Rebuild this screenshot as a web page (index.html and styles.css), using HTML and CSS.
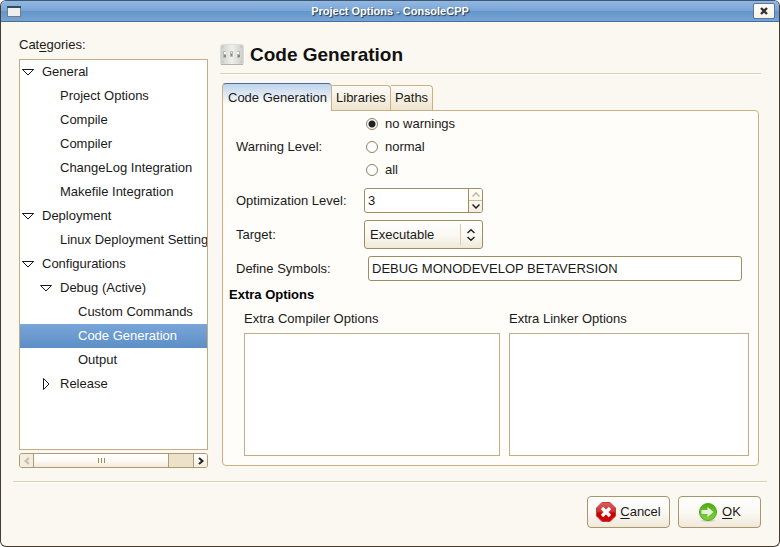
FILE: index.html
```html
<!DOCTYPE html>
<html lang="en">
<head>
<meta charset="utf-8">
<title>Project Options - ConsoleCPP</title>
<link rel="stylesheet" href="styles.css">
</head>
<body>
<div class="window">
  <header class="titlebar">
    <svg class="window-icon" width="14" height="11" viewBox="0 0 14 11" aria-hidden="true"><rect x=".5" y=".5" width="13" height="10" fill="#eeeeec" stroke="#777b80"/><path d="M0 1h14" stroke="#35485c" stroke-width="2"/></svg>
    <h1 class="title">Project Options - ConsoleCPP</h1>
    <button class="close" aria-label="Close"><svg width="8" height="8" viewBox="0 0 8 8"><path d="M1 1l6 6M7 1l-6 6" stroke="#33332f" stroke-width="2.4"/></svg></button>
  </header>
  <div class="content">
    <nav class="sidebar">
      <div class="caption" id="cat">Cat<u>e</u>gories:</div>
      <ul class="tree" aria-labelledby="cat">
        <li><button class="node"><svg class="arrow" viewBox="0 0 12 12"><path d="M.5 3.5h11L6 9z"/></svg>General</button></li>
        <li><button class="node level-2">Project Options</button></li>
        <li><button class="node level-2">Compile</button></li>
        <li><button class="node level-2">Compiler</button></li>
        <li><button class="node level-2">ChangeLog Integration</button></li>
        <li><button class="node level-2">Makefile Integration</button></li>
        <li><button class="node"><svg class="arrow" viewBox="0 0 12 12"><path d="M.5 3.5h11L6 9z"/></svg>Deployment</button></li>
        <li><button class="node level-2">Linux Deployment Settings</button></li>
        <li><button class="node"><svg class="arrow" viewBox="0 0 12 12"><path d="M.5 3.5h11L6 9z"/></svg>Configurations</button></li>
        <li><button class="node level-2"><svg class="arrow" viewBox="0 0 12 12"><path d="M.5 3.5h11L6 9z"/></svg>Debug (Active)</button></li>
        <li><button class="node level-3">Custom Commands</button></li>
        <li><button class="node level-3 selected" aria-current="true">Code Generation</button></li>
        <li><button class="node level-3">Output</button></li>
        <li><button class="node level-2"><svg class="arrow" viewBox="0 0 12 12"><path d="M3.500 .5v11L9 6z"/></svg>Release</button></li>
      </ul>
      <div class="scrollbar">
        <button class="step disabled" aria-label="Scroll left" disabled><svg width="6" height="8" viewBox="0 0 6 8"><path d="M5 1L1.500 4L5 7"/></svg></button>
        <div class="thumb"><i></i><i></i><i></i></div>
        <div class="trough"></div>
        <button class="step" aria-label="Scroll right"><svg width="6" height="8" viewBox="0 0 6 8"><path d="M1 1l3.500 3L1 7"/></svg></button>
      </div>
    </nav>
    <main class="main">
      <div class="heading">
        <svg width="24" height="22" viewBox="0 0 24 22" aria-hidden="true">
          <defs><linearGradient id="plate"><stop offset="0" stop-color="#cfcfca"/><stop offset=".5" stop-color="#efefec"/><stop offset="1" stop-color="#cbcbc7"/></linearGradient></defs>
          <rect x=".5" y=".5" width="23" height="20" rx="2" fill="url(#plate)" stroke="#dcdcd6"/>
          <path d="M1 20.500h22" stroke="#b2b2ad"/>
          <g fill="#bdbdb8"><circle cx="3" cy="3" r=".8"/><circle cx="21" cy="3" r=".8"/><circle cx="3" cy="18" r=".8"/><circle cx="21" cy="18" r=".8"/></g>
          <g fill="#b4b4b0"><rect x="3" y="7" width="3" height="7" rx="1"/><rect x="10" y="7" width="3" height="6" rx="1"/><rect x="17" y="7" width="3" height="7" rx="1"/></g>
          <g fill="#f8f8f5"><rect x="4" y="8" width="2" height="2"/><rect x="11" y="8" width="1" height="1"/><rect x="17" y="8" width="2" height="2"/></g>
          <g fill="#858581"><rect x="4" y="11" width="2" height="2"/><rect x="11" y="10" width="1" height="2"/><rect x="18" y="11" width="2" height="2"/></g>
        </svg>
        <h2>Code Generation</h2>
      </div>
      <div class="notebook">
        <div class="tabs" role="tablist">
          <button class="tab active" role="tab" aria-selected="true">Code Generation</button>
          <button class="tab" role="tab">Libraries</button>
          <button class="tab" role="tab">Paths</button>
        </div>
        <section class="panel">
          <div class="form">
            <div class="row">
              <span class="label">Warning Level:</span>
              <div class="radios" role="radiogroup" aria-label="Warning Level">
                <label><input type="radio" name="warn" checked>no warnings</label>
                <label><input type="radio" name="warn">normal</label>
                <label><input type="radio" name="warn">all</label>
              </div>
            </div>
            <div class="row">
              <label class="label" for="opt">Optimization Level:</label>
              <div class="spin">
                <input id="opt" type="text" inputmode="numeric" value="3">
                <div class="spin-buttons">
                  <button class="up" aria-label="Increase"><svg width="8" height="5" viewBox="0 0 8 5"><path d="M.5 4.500L4 1l3.500 3.500"/></svg></button>
                  <button aria-label="Decrease"><svg width="8" height="5" viewBox="0 0 8 5"><path d="M.5 .5L4 4L7.500 .5"/></svg></button>
                </div>
              </div>
            </div>
            <div class="row">
              <label class="label" for="target">Target:</label>
              <div class="combo">
                <select id="target"><option>Executable</option></select>
                <svg class="combo-arrows" width="8" height="12" viewBox="0 0 8 12" aria-hidden="true"><path d="M.5 4L4 .8L7.500 4M.5 8L4 11.200L7.500 8"/></svg>
              </div>
            </div>
            <div class="row">
              <label class="label wide" for="symbols">Define Symbols:</label>
              <input class="entry" id="symbols" type="text" value="DEBUG MONODEVELOP BETAVERSION">
            </div>
          </div>
          <h3>Extra Options</h3>
          <div class="extras">
            <div class="extra compiler"><label for="comp">Extra Compiler Options</label><textarea id="comp"></textarea></div>
            <div class="extra linker"><label for="link">Extra Linker Options</label><textarea id="link"></textarea></div>
          </div>
        </section>
      </div>
    </main>
  </div>
  <footer class="actions">
    <button class="action"><svg width="20" height="20" viewBox="0 0 20 20" aria-hidden="true"><defs><linearGradient id="red" x2="0" y2="1"><stop offset="0" stop-color="#d96060"/><stop offset=".5" stop-color="#cc3030"/><stop offset=".55" stop-color="#cc0000"/><stop offset="1" stop-color="#d00808"/></linearGradient></defs><path d="M6 .5h8L19.500 6v8L14 19.500H6L.5 14V6z" fill="url(#red)" stroke="#c63a3a"/><path d="M6 6l8 8M14 6l-8 8" stroke="#fff" stroke-width="3.400"/></svg><span><u>C</u>ancel</span></button>
    <button class="action"><svg width="20" height="20" viewBox="0 0 20 20" aria-hidden="true"><defs><linearGradient id="green" x2="0" y2="1"><stop offset="0" stop-color="#4fae10"/><stop offset="1" stop-color="#7ed43c"/></linearGradient></defs><ellipse cx="10" cy="18.500" rx="7" ry="1.500" fill="#d4d2c8"/><circle cx="10" cy="10" r="8.500" fill="url(#green)" stroke="#55a51c"/><path d="M3.500 8h6V5L15.500 10l-6 5v-3h-6z" fill="#ebefe6"/></svg><span><u>O</u>K</span></button>
  </footer>
</div>
</body>
</html>
```
FILE: styles.css
```css
* { box-sizing: border-box; }
body {
  margin: 0;
  background: #fff;
  font: 13px/16px "Liberation Sans", Arial, sans-serif;
  color: #1a1a1a;
}
button, input, select, textarea { font: inherit; color: inherit; margin: 0; padding: 0; }
button { background: none; border: 0; }
svg { display: block; flex: none; }
h1, h2, h3, ul { margin: 0; padding: 0; }
u { text-underline-offset: 2px; }

.window {
  min-height: 100vh;
  display: flex;
  flex-direction: column;
  border: 1px solid #453d31;
  border-top-color: #40566f;
  border-radius: 6px;
  background: #fbf8f1;
  overflow: hidden;
}
.titlebar {
  height: 21px;
  display: flex;
  align-items: center;
  padding: 0 4px 0 6px;
  border-bottom: 1px solid #486f98;
  background: linear-gradient(#92b8e3, #79a6d7 48%, #6496ca 52%, #76a3d5);
}
.title {
  flex: 1;
  padding-left: 6px;
  text-align: center;
  font-size: 11px;
  color: #fff;
  text-shadow: 1px 1px 1px #27394d;
}
.close {
  width: 22px;
  height: 16px;
  display: grid;
  place-items: center;
  background: linear-gradient(#fff, #f6f2e6);
  border: 1px solid #54789f;
  border-radius: 2px;
}

.content {
  flex: 1;
  display: flex;
  gap: 12px;
  padding: 14px 18px 13px;
}
.sidebar { width: 189px; display: flex; flex-direction: column; }
.caption { height: 23px; padding-top: 1px; }
.tree {
  flex: 1;
  list-style: none;
  background: #fff;
  border: 1px solid #c3ae83;
  overflow: hidden;
}
.node {
  display: flex;
  align-items: center;
  position: relative;
  width: 100%;
  height: 24px;
  padding-left: 22px;
  white-space: nowrap;
  text-align: left;
}
.level-2 { padding-left: 40px; }
.level-3 { padding-left: 58px; }
.arrow {
  width: 12px;
  height: 12px;
  margin-left: -20px;
  margin-right: 8px;
  fill: #fff;
  stroke: #1a1a1a;
}
.selected { background: linear-gradient(#7aa5d8, #5b8fc5); color: #fff; }

.scrollbar {
  display: flex;
  height: 15px;
  margin-top: 3px;
  border: 1px solid #b09b70;
  border-radius: 3px;
  background: #ede2c9;
  overflow: hidden;
}
.step {
  width: 14px;
  display: grid;
  place-items: center;
  background: linear-gradient(#fff, #f4eee0);
  border-left: 1px solid #b09b70;
}
.step.disabled { background: #f3eedf; border-left: 0; border-right: 1px solid #b09b70; }
.step path { fill: none; stroke: #222; stroke-width: 2; }
.step.disabled path { stroke: #c5bda7; }
.thumb {
  flex: 135;
  display: flex;
  gap: 2px;
  justify-content: center;
  align-items: center;
  background: linear-gradient(#fff, #fdfbf6 50%, #f1eadb);
  border-right: 1px solid #b09b70;
}
.thumb i { width: 1px; height: 5px; background: #a08b5e; }
.trough { flex: 24; }

.main { flex: 1; min-width: 0; display: flex; flex-direction: column; padding-bottom: 2px; }
.heading {
  display: flex;
  align-items: center;
  gap: 6px;
  height: 38px;
  border-bottom: 1px solid #dccfb3;
  box-shadow: 0 1px #fff;
}
h2 { font-size: 19px; line-height: 24px; color: #111; }
.notebook { flex: 1; display: flex; flex-direction: column; margin: 9px 2px 0; }
.tabs { display: flex; align-items: flex-end; }
.tab {
  height: 25px;
  padding: 0 4px;
  border: 1px solid #c9b183;
  border-left: 0;
  border-bottom: 0;
  border-radius: 0 4px 0 0;
  background: linear-gradient(#fdfbf6, #efe4cf);
}
.tab.active {
  position: relative;
  height: 28px;
  margin-bottom: -1px;
  padding: 0 4px 0 5px;
  border-left: 1px solid #c9b183;
  border-top-color: #4b709a;
  border-radius: 4px 4px 0 0;
  background: linear-gradient(#bed3ec, #fefdf9 75%);
}
.panel {
  flex: 1;
  display: flex;
  flex-direction: column;
  padding: 1px 9px 9px 6px;
  border: 1px solid #c9b183;
  border-radius: 0 4px 4px 4px;
  background: #fefdf9;
}
.form { display: flex; flex-direction: column; gap: 7px; padding: 0 7px; }
.row { display: flex; align-items: center; }
.label { width: 128px; }
.label.wide { width: 132px; }
.radios label { display: flex; align-items: center; gap: 7px; height: 23px; }
input[type="radio"] {
  appearance: none;
  width: 12px;
  height: 12px;
  margin-left: 2px;
  border: 1px solid #8f8062;
  border-radius: 50%;
  background: #fff;
}
input[type="radio"]:checked { background: radial-gradient(circle, #222 3px, #fff 4px); }
.spin {
  display: flex;
  width: 119px;
  height: 25px;
  border: 1px solid #a08c63;
  border-radius: 3px;
  background: #fff;
  overflow: hidden;
}
.spin input { flex: 1; min-width: 0; border: 0; padding: 0 3px; background: none; }
.spin-buttons {
  width: 14px;
  display: grid;
  grid-template-rows: 1fr 1fr;
  border-left: 1px solid #a08c63;
  background: linear-gradient(#fff, #f4eee0);
}
.spin-buttons button { display: grid; place-items: center; }
.spin-buttons .up { border-bottom: 1px solid #cdbb92; }
.spin-buttons path, .combo-arrows path { fill: none; stroke: #222; stroke-width: 1.500; }
.spin-buttons .up path { stroke: #c5b590; }
.combo { position: relative; width: 119px; }
.combo select {
  appearance: none;
  display: block;
  width: 100%;
  height: 29px;
  padding: 0 24px 0 5px;
  border: 1px solid #a08c63;
  border-radius: 3px;
  background: linear-gradient(#d9ccae, #d9ccae) right 21px center / 1px 21px no-repeat, linear-gradient(#fff, #fbf9f4 50%, #f0e9d9);
}
.combo-arrows { position: absolute; right: 8px; top: 9px; pointer-events: none; }
.entry {
  flex: 1;
  min-width: 0;
  height: 25px;
  padding: 0 3px;
  border: 1px solid #a08c63;
  border-radius: 3px;
  background: #fff;
}
h3 { margin-top: 6px; font-size: 13px; line-height: 16px; color: #000; }
.extras { flex: 1; display: flex; gap: 9px; margin: 8px 0 0 15px; }
.extra { display: flex; flex-direction: column; gap: 6px; }
.compiler { flex: 256; }
.linker { flex: 240; }
.extra textarea { flex: 1; width: 100%; resize: none; border: 1px solid #c3ae83; background: #fff; }

.actions {
  display: flex;
  justify-content: flex-end;
  gap: 8px;
  margin: 0 12px;
  padding: 14px 6px 18px;
  border-top: 1px solid #dccfb3;
  box-shadow: inset 0 1px #fff;
}
.action {
  display: flex;
  align-items: center;
  justify-content: center;
  gap: 4px;
  width: 83px;
  height: 32px;
  border: 1px solid #a9966f;
  border-radius: 4px;
  background: linear-gradient(#fff, #fbf9f4 50%, #f0e9d9);
}
```
